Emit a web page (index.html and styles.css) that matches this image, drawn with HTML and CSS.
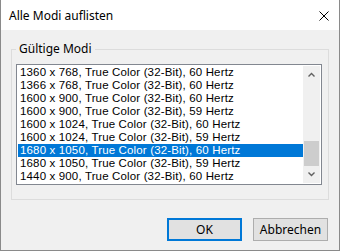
FILE: index.html
```html
<!DOCTYPE html>
<html lang="de">
<head>
  <meta charset="UTF-8">
  <title>Alle Modi auflisten</title>
  <link rel="stylesheet" href="styles.css">
</head>
<body>
  <div class="window">
    <div class="titlebar">
      <span class="title">Alle Modi auflisten</span>
      <svg class="close" width="10" height="10" viewBox="0 0 10 10">
        <path d="M0.5 0.5 L9.5 9.5 M9.5 0.5 L0.5 9.5" stroke="#000" stroke-width="1" fill="none" />
      </svg>
    </div>

    <fieldset class="group">
      <legend>Gültige Modi</legend>
      <div class="listbox">
        <div class="items" id="lista"></div>
        <div class="scrollbar">
          <div class="arrow">
            <svg width="7" height="5" viewBox="0 0 7 5"><path d="M0.5 4.5 L3.5 1.5 L6.5 4.5" stroke="#606060" stroke-width="1.4" fill="none" /></svg>
          </div>
          <div class="track"><div class="thumb"></div></div>
          <div class="arrow">
            <svg width="7" height="5" viewBox="0 0 7 5"><path d="M0.5 0.5 L3.5 3.5 L6.5 0.5" stroke="#606060" stroke-width="1.4" fill="none" /></svg>
          </div>
        </div>
      </div>
    </fieldset>

    <div class="buttons">
      <button class="btn default">OK</button>
      <button class="btn">Abbrechen</button>
    </div>
  </div>

  <script>
    const modi = [
      "1360 x 768, True Color (32-Bit), 60 Hertz",
      "1366 x 768, True Color (32-Bit), 60 Hertz",
      "1600 x 900, True Color (32-Bit), 60 Hertz",
      "1600 x 900, True Color (32-Bit), 59 Hertz",
      "1600 x 1024, True Color (32-Bit), 60 Hertz",
      "1600 x 1024, True Color (32-Bit), 59 Hertz",
      "1680 x 1050, True Color (32-Bit), 60 Hertz",
      "1680 x 1050, True Color (32-Bit), 59 Hertz",
      "1440 x 900, True Color (32-Bit), 60 Hertz"
    ];
    const selected = 6;

    const lista = document.getElementById("lista");
    modi.forEach((m, i) => {
      lista.innerHTML += `<div class="item${i === selected ? " selected" : ""}">${m}</div>`;
    });
  </script>
</body>
</html>
```

FILE: styles.css
```css
body { margin: 0; background: #f0f0f0; font-family: "Noto Sans", sans-serif; }
.window { width: 340px; height: 251px; box-sizing: border-box; background: #f0f0f0; border: 1px solid #8a8a8a; border-top: none; display: flex; flex-direction: column; }
.titlebar { height: 30px; background: white; display: flex; align-items: center; justify-content: space-between; padding: 0 10px 0 8px; flex-shrink: 0; }
.title { font-size: 12px; color: #000; }
.close { margin-top: 1px; }

.group { margin: 11px 10px 0 10px; padding: 0 0 14px 0; border: 1px solid #dcdcdc; min-width: 0; }
.group legend { font-size: 12px; line-height: 16px; padding: 0 3px; margin-left: 4px; color: #000; }

.listbox { margin: 7px 0 0 4px; width: 306px; height: 121px; box-sizing: border-box; border: 1px solid #828790; padding: 1px; background: white; display: flex; }
.items { flex: 1; overflow: hidden; }
.item { height: 13px; line-height: 13px; padding-left: 2px; font-family: "Liberation Sans", Arial, sans-serif; font-size: 11.5px; letter-spacing: 0.15px; color: #000; white-space: nowrap; }
.item.selected { background: #0078d7; color: white; }

.scrollbar { width: 17px; background: #f0f0f0; display: flex; flex-direction: column; }
.arrow { height: 17px; display: flex; align-items: center; justify-content: center; }
.track { flex: 1; display: flex; flex-direction: column; justify-content: flex-end; }
.thumb { height: 25px; margin: 0 1px; background: #cdcdcd; }

.buttons { display: flex; justify-content: flex-end; gap: 11px; margin-top: 18px; padding-right: 11px; }
.btn { width: 75px; height: 23px; box-sizing: border-box; background: #e1e1e1; border: 1px solid #adadad; font-family: "Noto Sans", sans-serif; font-size: 12px; color: #000; padding: 0; }
.btn.default { border: 2px solid #0078d7; }
```
